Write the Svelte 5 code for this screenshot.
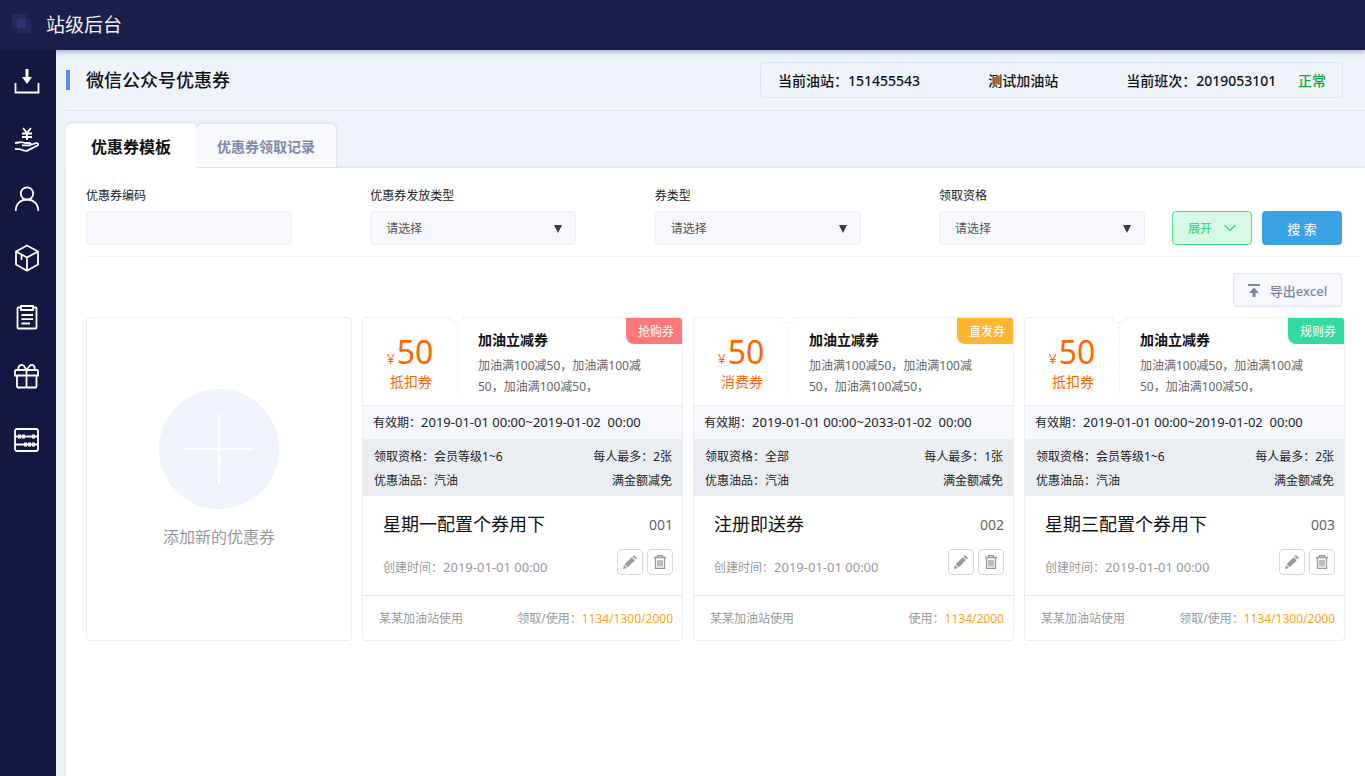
<script lang="ts">
	let activeTab = 0
	let code = ''
	const tabs = ['优惠券模板', '优惠券领取记录']

	const filters = [
		{ id: 'send', label: '优惠券发放类型' },
		{ id: 'type', label: '券类型' },
		{ id: 'level', label: '领取资格' }
	]

	const coupons = [
		{
			tag: '抢购券', color: 'red', kind: '抵扣券', valid: '2019-01-01 00:00~2019-01-02\u00a0 00:00',
			who: '会员等级1~6', max: '2张', name: '星期一配置个券用下', no: '001',
			usedLabel: '领取/使用：', used: '1134/1300/2000'
		},
		{
			tag: '直发券', color: 'yellow', kind: '消费券', valid: '2019-01-01 00:00~2033-01-02\u00a0 00:00',
			who: '全部', max: '1张', name: '注册即送券', no: '002',
			usedLabel: '使用：', used: '1134/2000'
		},
		{
			tag: '规则券', color: 'green', kind: '抵扣券', valid: '2019-01-01 00:00~2019-01-02\u00a0 00:00',
			who: '会员等级1~6', max: '2张', name: '星期三配置个券用下', no: '003',
			usedLabel: '领取/使用：', used: '1134/1300/2000'
		}
	]
</script>

<svelte:head>
	<title>站级后台</title>
</svelte:head>

<div class="app">
	<header class="topbar">
		<svg class="logo" width="20" height="20" viewBox="0 0 20 20" aria-hidden="true">
			<rect width="14" height="14" fill="#222a60" />
			<rect x="5" y="5" width="14" height="14" fill="#222a60" />
			<rect x="5" y="5" width="9" height="9" fill="#2b3575" />
		</svg>
		<span>站级后台</span>
	</header>

	<div class="body">
		<nav class="sidebar">
			<div class="group">
				<a href="#download" aria-label="下载">
					<svg viewBox="0 0 24 24"><path d="M.5 14v9.500h23V14" /><path d="M12 0v9" stroke-width="3" /><path class="fill" d="M7 8h10l-5 7z" /></svg>
				</a>
				<a href="#money" aria-label="收款">
					<svg viewBox="0 0 24 24"><path d="M8 0l4 5 4-5M12 5v7M7 5.500h10M7 9h10" /><path d="M0 15l4-.5c3-1 4 0 6 .5h5c1.500.5 1 2-.5 2.300H7M15 17l6-1.800c2-.4 3 1 1.500 2.300L12 22.800c-4 .6-5-1.800-8-1.600H0" /></svg>
				</a>
				<a href="#user" aria-label="会员">
					<svg viewBox="0 0 24 24"><circle cx="12" cy="6.500" r="6.200" /><path d="M.7 24c0-7 4.800-11.500 11.300-11.500S23.300 17 23.300 24" /></svg>
				</a>
				<a href="#goods" aria-label="商品">
					<svg viewBox="0 0 24 24"><path d="M12 -.5L23 5.500v13L12 24.700 1 18.500v-13zM1 5.500l11 6 11-6M12 11.500v13M6.500 9v5" /></svg>
				</a>
				<a href="#order" aria-label="订单">
					<svg viewBox="0 0 24 24"><path d="M6 2.500H3.500a1 1 0 0 0-1 1v19a1 1 0 0 0 1 1h17a1 1 0 0 0 1-1v-19a1 1 0 0 0-1-1H18M6 1h12v4H6zM6.500 10h11.500M6.500 14.200h11.500M6.500 18.500H15" /></svg>
				</a>
				<a href="#gift" aria-label="礼品">
					<svg viewBox="0 0 24 24"><path d="M1 6h21a1 1 0 0 1 1 1v4.500H0V7a1 1 0 0 1 1-1zM2 11.500v11a1 1 0 0 0 1 1h17.500a1 1 0 0 0 1-1v-11M11.500 6v17M11.500 6L9 2C6-.5 2.500 2 3.500 6M11.500 6L14.500 2c3-2.500 6 0 5 4" /></svg>
				</a>
			</div>
			<div class="group">
				<a href="#count" aria-label="统计">
					<svg viewBox="0 0 24 24"><rect x="0" y="1" width="23" height="22" rx="2" /><path d="M0 8.500h23M0 16.500h23" /><path d="M3 8.500h3M7 8.500h3M17 8.500h3M9 16.500h3M13 16.500h3M17 16.500h3" stroke-width="4" /></svg>
				</a>
			</div>
		</nav>

		<main>
			<div class="page-head">
				<h1>微信公众号优惠券</h1>
				<div class="station">
					<span>当前油站：151455543</span>
					<span>测试加油站</span>
					<span>当前班次：2019053101 <em>正常</em></span>
				</div>
			</div>

			<div class="tabs">
				{#each tabs as tab, i}
					<button class:active={activeTab == i} on:click={() => (activeTab = i)}>{tab}</button>
				{/each}
			</div>

			<div class="panel">
				<form class="filters" on:submit|preventDefault>
					<div class="fields">
						<div class="field">
							<label for="code">优惠券编码</label>
							<input id="code" type="text" bind:value={code} />
						</div>
						{#each filters as f}
							<div class="field">
								<label for={f.id}>{f.label}</label>
								<div class="select">
									<select id={f.id}><option>请选择</option></select>
									<svg width="8" height="8" viewBox="0 0 8 8" aria-hidden="true"><path d="M0 0h8L4 8z" /></svg>
								</div>
							</div>
						{/each}
					</div>
					<button class="expand" type="button">
						展开
						<svg width="12" height="8" viewBox="0 0 12 8" aria-hidden="true"><path d="M.5 1L6 6.500 11.500 1" /></svg>
					</button>
					<button class="search" type="submit">搜 索</button>
				</form>

				<div class="toolbar">
					<button class="export">
						<svg width="12" height="13" viewBox="0 0 12 13" aria-hidden="true"><path d="M0 0h12v2H0zM6 3.500L11 9H7.500v4h-3V9H1z" /></svg>
						导出excel
					</button>
				</div>

				<div class="cards">
					<button class="card add">
						<svg width="120" height="120" viewBox="0 0 120 120" aria-hidden="true">
							<circle cx="60" cy="60" r="60" fill="#eff3fb" />
							<path d="M60 25v70M25 60h70" stroke="#fff" stroke-width="2" />
						</svg>
						<span>添加新的优惠券</span>
					</button>

					{#each coupons as c}
						<article class="card">
							<div class="top">
								<div class="price">
									<p class="amount"><small>¥</small>50</p>
									<p class="kind">{c.kind}</p>
								</div>
								<div class="desc">
									<h3>加油立减券</h3>
									<p>加油满100减50，加油满100减50，加油满100减50，</p>
								</div>
								<svg class="notch" width="14" height="7" viewBox="0 0 14 7" aria-hidden="true"><path d="M.5 0a6.500 6.500 0 0 0 13 0" /></svg>
								<span class="tag {c.color}">{c.tag}</span>
							</div>
							<p class="valid">有效期：<time>{c.valid}</time></p>
							<div class="rules">
								<p><span>领取资格：{c.who}</span><span>每人最多：{c.max}</span></p>
								<p><span>优惠油品：汽油</span><span>满金额减免</span></p>
							</div>
							<div class="info">
								<div class="line">
									<h2>{c.name}</h2>
									<span class="no">{c.no}</span>
								</div>
								<div class="line bottom">
									<span class="created">创建时间：<time>2019-01-01 00:00</time></span>
									<div class="actions">
										<button aria-label="编辑">
											<svg width="14" height="14" viewBox="0 0 14 14"><path d="M0 14l1-4 3 3zM1.700 9.200L8.700 2.200l3.100 3.100-7 7zM9.500 1.400L10.900 0 14 3.100l-1.400 1.400z" /></svg>
										</button>
										<button aria-label="删除">
											<svg width="14" height="14" viewBox="0 0 14 14"><path class="stroke" d="M1 2.500h12M4.500 2V.7h5V2M2.500 3v10.300h9V3M5 5v6.500M7 5v6.500M9 5v6.500" /></svg>
										</button>
									</div>
								</div>
							</div>
							<div class="foot">
								<span>某某加油站使用</span>
								<span>{c.usedLabel}<b>{c.used}</b></span>
							</div>
						</article>
					{/each}
				</div>
			</div>
		</main>
	</div>
</div>

<style>
	:global(body) {
		margin: 0;
		font-family: "Noto Sans", "Noto Sans CJK SC", sans-serif;
		font-size: 12px;
		color: #222;
	}

	* {
		box-sizing: border-box;
	}

	h1, h2, h3, p {
		margin: 0;
	}

	button, input, select {
		font: inherit;
	}

	button {
		padding: 0;
		cursor: pointer;
	}

	time {
		font-size: 13px;
	}

	.app {
		display: flex;
		flex-direction: column;
		min-height: 100vh;
	}

	.topbar {
		display: flex;
		align-items: center;
		gap: 14px;
		height: 50px;
		padding: 0 12px 2px;
		background: #191f4a;
		color: #f2f2f6;
		font-size: 19px;
		box-shadow: 0 1px 6px rgba(40, 60, 110, 0.5);
		z-index: 1;
	}

	.body {
		display: flex;
		flex: 1;
	}

	.sidebar {
		width: 56px;
		flex: none;
		display: flex;
		flex-direction: column;
		gap: 40px;
		padding: 19px 0;
		background: #131741;
		z-index: 2;
	}

	.group {
		display: flex;
		flex-direction: column;
		align-items: center;
		gap: 35px;
		padding-right: 2px;
	}

	.group a {
		height: 24px;
	}

	.group svg {
		display: block;
		width: 24px;
		height: 24px;
		fill: none;
		stroke: #fff;
		stroke-width: 1.8;
		overflow: visible;
	}

	.group .fill {
		fill: #fff;
		stroke: none;
	}

	main {
		flex: 1;
		display: flex;
		flex-direction: column;
		padding-left: 10px;
		background: #eff3fb;
	}

	.page-head {
		display: flex;
		align-items: center;
		justify-content: space-between;
		height: 61px;
		padding-right: 22px;
		border-bottom: 1px solid #dfe2f3;
	}

	h1 {
		padding-left: 16px;
		border-left: 4px solid #4d8ff5;
		font-size: 18px;
		line-height: 20px;
		font-weight: 500;
		color: #111;
	}

	.station {
		display: flex;
		justify-content: space-between;
		width: 583px;
		padding: 2px 16px 0 17px;
		border: 1px solid #dfe2f3;
		border-radius: 4px;
		font-size: 14px;
		line-height: 32px;
		font-weight: 500;
		color: #111;
	}

	.station em {
		margin-left: 18px;
		font-style: normal;
		color: #1aa64a;
	}

	.tabs {
		display: flex;
		padding-top: 12px;
		z-index: 1;
	}

	.tabs button {
		height: 44px;
		padding: 0 21px 0 20px;
		border: 1px solid #e0e3f2;
		border-left: none;
		border-bottom: none;
		border-radius: 6px 6px 0 0;
		background: #f7f9fd;
		font-size: 14px;
		font-weight: 700;
		color: #7f88a5;
		box-shadow: 0 -1px 2px rgba(190, 198, 228, 0.4);
	}

	.tabs .active {
		height: 45px;
		margin-bottom: -1px;
		padding: 0 25px;
		border-color: #fff;
		background: #fff;
		font-size: 16px;
		color: #111;
	}

	.panel {
		flex: 1;
		padding: 16px 0 20px 20px;
		border-top: 1px solid #e0e3f2;
		background: #fff;
		box-shadow: -1px 0 2px #dfe3f3;
	}

	.filters {
		display: flex;
		align-items: flex-end;
		gap: 10px;
		margin-right: 5px;
		padding: 0 18px 11px 0;
		border-bottom: 1px solid #f3f4f6;
	}

	.fields {
		flex: 1;
		display: flex;
		justify-content: space-between;
		margin-right: 17px;
	}

	.field {
		width: 206px;
	}

	.field label {
		display: block;
		margin-bottom: 4px;
		line-height: 23px;
	}

	.field input,
	.field select {
		display: block;
		width: 100%;
		height: 34px;
		padding: 0 15px;
		border: 1px solid #eceef6;
		border-radius: 4px;
		background: #f7f8fd;
		color: #555;
		appearance: none;
	}

	.select {
		position: relative;
	}

	.select svg {
		position: absolute;
		top: 14px;
		right: 14px;
		fill: #3c3c3c;
		pointer-events: none;
	}

	.expand,
	.search {
		width: 80px;
		height: 34px;
		border-radius: 4px;
	}

	.expand {
		display: flex;
		align-items: center;
		justify-content: center;
		gap: 12px;
		border: 1px solid #48e28c;
		background: #d8f9e5;
		color: #35df80;
		font-weight: 500;
	}

	.expand svg {
		fill: none;
		stroke: #35df80;
		stroke-width: 1.4;
	}

	.search {
		border: none;
		background: #3ba3e3;
		color: #fff;
		font-size: 13px;
	}

	.toolbar {
		display: flex;
		justify-content: flex-end;
		padding: 16px 23px 10px 0;
	}

	.export {
		display: flex;
		align-items: center;
		justify-content: center;
		gap: 10px;
		width: 109px;
		height: 34px;
		border: 1px solid #e1e4f2;
		border-radius: 4px;
		background: #f7f8fd;
		color: #7c86a4;
		font-size: 13px;
		font-weight: 500;
	}

	.export svg {
		fill: #7c86a4;
	}

	.cards {
		display: grid;
		grid-template-columns: 266px repeat(3, 1fr);
		gap: 10px;
		padding-right: 20px;
	}

	.card {
		border: 1px solid #ebedf4;
		border-radius: 4px;
		background: #fff;
	}

	.add {
		display: flex;
		flex-direction: column;
		align-items: center;
		justify-content: center;
		gap: 16px;
		padding-bottom: 20px;
		font-size: 16px;
		line-height: 24px;
		color: #999;
	}

	.top {
		position: relative;
		display: flex;
		height: 88px;
		border-bottom: 1px solid #e8eaf2;
	}

	.price {
		width: 95px;
		margin: 8px 0 12px;
		padding-top: 10px;
		border-right: 1px dashed #f0f2f7;
		color: #ff6600;
		text-align: center;
	}

	.amount {
		display: flex;
		justify-content: center;
		align-items: baseline;
		gap: 2px;
		font-size: 32px;
		line-height: 32px;
	}

	.amount small {
		font-size: 14px;
		line-height: 14px;
	}

	.kind {
		padding-left: 2px;
		font-size: 14px;
		line-height: 28px;
	}

	.desc {
		flex: 1;
		padding: 9px 34px 0 20px;
	}

	.desc h3 {
		margin-bottom: 2px;
		font-size: 14px;
		line-height: 26px;
		font-weight: 700;
		color: #111;
	}

	.desc p {
		line-height: 21px;
		color: #666;
	}

	.notch {
		position: absolute;
		top: -1px;
		left: 87px;
		fill: #fff;
		stroke: #ebedf4;
	}

	.tag {
		position: absolute;
		top: 0;
		right: 0;
		width: 56px;
		padding: 2px 0 0 4px;
		border-radius: 0 3px 0 8px;
		line-height: 24px;
		text-align: center;
		color: #fff;
	}

	.red {
		background: #fd777b;
	}

	.yellow {
		background: #fdb532;
	}

	.green {
		background: #35d9a2;
	}

	.valid {
		padding-left: 10px;
		background: #f6f8fd;
		line-height: 32px;
	}

	.rules {
		padding: 6px 10px 3px 11px;
		background: #eaeef3;
		line-height: 24px;
	}

	.rules p {
		display: flex;
		justify-content: space-between;
	}

	.info {
		padding: 14px 9px 20px 20px;
		border-bottom: 1px solid #e8eaf2;
	}

	.line {
		display: flex;
		justify-content: space-between;
		align-items: center;
	}

	.bottom {
		align-items: flex-end;
	}

	h2 {
		font-size: 18px;
		line-height: 28px;
		font-weight: 400;
		color: #111;
	}

	.no {
		font-size: 14px;
		color: #666;
	}

	.created {
		line-height: 14px;
		color: #999;
	}

	.actions {
		display: flex;
		gap: 4px;
		padding-top: 11px;
	}

	.actions button {
		display: flex;
		align-items: center;
		justify-content: center;
		width: 26px;
		height: 26px;
		border: 1px solid #d8d8d8;
		border-radius: 4px;
		background: #fff;
	}

	.actions svg {
		fill: #999;
	}

	.actions .stroke {
		fill: none;
		stroke: #999;
		stroke-width: 1.3;
	}

	.foot {
		display: flex;
		justify-content: space-between;
		padding: 2px 9px 0 16px;
		line-height: 42px;
		color: #999;
	}

	.foot b {
		font-weight: 400;
		color: #faa21e;
	}
</style>
